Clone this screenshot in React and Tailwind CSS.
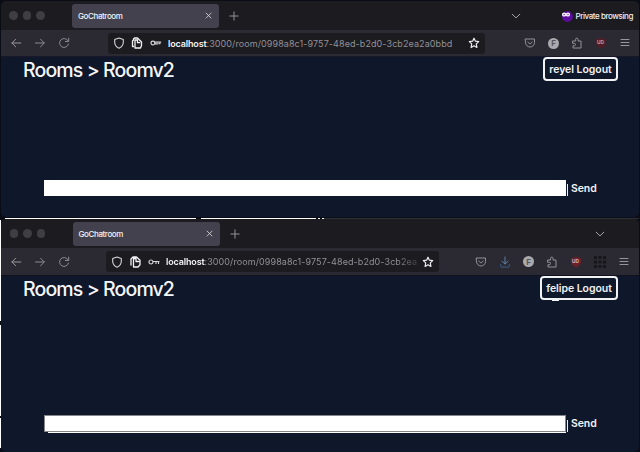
import React from "react";

const stroke = { fill: "none", stroke: "currentColor", strokeLinecap: "round", strokeLinejoin: "round" };

function Icon({ children, className = "", size = 12, width = 1 }) {
  return (
    <svg viewBox="0 0 12 12" width={size} height={size} strokeWidth={width} {...stroke} className={`block shrink-0 ${className}`}>
      {children}
    </svg>
  );
}

const Back = () => <Icon className="text-[#96959b]"><path d="M10.8 6H1.9M5.7 2.2 1.9 6l3.8 3.8" /></Icon>;
const Forward = () => <Icon className="text-[#8a8990]"><path d="M1.5 6h8.8M6.5 2.2 10.3 6 6.5 9.8" /></Icon>;
const Reload = () => <Icon className="text-[#8a8990]"><path d="M10 3.7A4.5 4.5 0 1 0 10.5 7M10.7 1.2v3.3H7.4" /></Icon>;
const Shield = () => <Icon className="text-[#d5d5d8]" width={1.1}><path d="M6 1 10.3 2.5v2.7C10.3 8 8.6 10 6 11.2 3.4 10 1.7 8 1.7 5.2V2.5Z" /></Icon>;
const Star = () => <Icon className="text-[#eeeef0]" width={1.2}><path d="m6 1.2 1.4 3 3.3.4-2.4 2.3.6 3.6L6 8.8l-2.9 1.7.6-3.6-2.4-2.3 3.3-.4Z" /></Icon>;
const Chevron = () => <Icon className="text-[#a5a4aa]"><path d="m2.2 4.2 3.8 3.7 3.8-3.7" /></Icon>;
const Pocket = () => <Icon className="text-[#929197]"><path d="M1.5 2h9v3.5a4.5 4.5 0 0 1-9 0ZM3.8 5 6 7.1 8.2 5" /></Icon>;
const Puzzle = () => (
  <Icon className="text-[#929197]">
    <path d="M2 4h2.6V2.3a1.2 1.2 0 0 1 2.4 0V4h3v7H2V8.7h1.3a1.2 1.2 0 0 0 0-2.4H2Z" />
  </Icon>
);
const Menu = () => <Icon className="text-[#96959b]"><path d="M2 2.5h8M2 5.5h8M2 8.5h8" /></Icon>;
const Download = () => (
  <Icon>
    <path d="M1.7 8.5v1.7q0 .9.9.9h6.8q.9 0 .9-.9V8.5" stroke="#3c5f86" />
    <path d="M6 1v7M3 5.2 6 8l3-2.8" stroke="#6080a4" />
  </Icon>
);

function Page({ framed }) {
  return (
    <Icon className="text-[#f4f4f5]" width={1.3}>
      {framed ? (
        <path d="M2 9V3l2-2h3.5L11 4.2v4.6L9 11H4.5V2.5H7v3h2.7" />
      ) : (
        <path d="M2.5 9.5h-1V4l1-1V2l1-1h3L10.5 5v3.5L9.5 11H4V3h2.5v2.7h2.2" />
      )}
    </Icon>
  );
}

const Grid = () => (
  <svg viewBox="0 0 12 12" width="12" height="12" className="block shrink-0">
    {[0, 4.5, 9].map((y) => [0, 4.5, 9].map((x) => (
      <rect key={`${x}-${y}`} x={x} y={y} width="3" height="3" rx=".5" fill="#17171b" />
    )))}
  </svg>
);

function Account() {
  return (
    <div className="flex h-[11px] w-[11px] shrink-0 items-center justify-center rounded-full bg-[#aaa9ad] text-[8px] font-bold leading-none text-[#56555c]">
      F
    </div>
  );
}

function Blocker({ lit }) {
  return (
    <svg viewBox="0 0 12 12" width="12" height="12" className="block shrink-0">
      <path d="M1 2.2 6.2.8l5 1.4v3.6c0 2.6-2 4.3-5 5.6C3 10.1 1 8.4 1 5.8Z" fill={lit ? "#68202a" : "#4f1e28"} />
      <text x="5.4" y="6.8" textAnchor="middle" fontSize="4.8" fontWeight="700" fill={lit ? "#dcb5ba" : "#b99ea3"}>UD</text>
    </svg>
  );
}

function Key({ wide }) {
  return (
    <svg viewBox="0 0 12 8" width="12" height="8" strokeWidth="1.2" {...stroke} className="block shrink-0 text-[#d5d5d8]">
      {wide ? (
        <path d="M5 4a2 2 0 1 1-4 0 2 2 0 0 1 4 0ZM5 3.5h6M8 3.5v2M10.5 3.5v2" />
      ) : (
        <path d="M4.8 4a1.9 1.9 0 1 1-3.8 0 1.9 1.9 0 0 1 3.8 0ZM5.3 3.2h5.4M5.5 4.9h2M9 4.7h1" />
      )}
    </svg>
  );
}

function PrivateBadge() {
  return (
    <div className="flex items-center gap-[2px]">
      <svg viewBox="0 0 12 12" width="12" height="12" className="block">
        <circle cx="6.5" cy="6.5" r="5.4" fill="#5b0c9b" />
        <path d="M.9 4.4q0-1.8 2.2-1.8 1.4 0 2 .8.8-.8 2-.8 2 0 2 1.8 0 2.2-2 2.2-1.2 0-2-.9-.8.9-2 .9-2.2 0-2.2-2.2Z" fill="#f5effb" />
        <circle cx="3.1" cy="4.6" r=".7" fill="#5b0c9b" />
        <circle cx="7" cy="4.6" r=".7" fill="#5b0c9b" />
      </svg>
      <span className="text-[8px] font-medium leading-none tracking-[-0.42px] text-[#f1f1f3]">Private browsing</span>
    </div>
  );
}

function TabStrip({ isPrivate }) {
  return (
    <div className={`flex h-[29px] shrink-0 items-center bg-[#1c1b20] ${isPrivate ? "pl-2" : "pl-[8.5px]"}`}>
      <div className="flex gap-[5px]">
        <i className="h-[8.5px] w-[8.5px] rounded-full bg-[#3e3e43]" />
        <i className="h-[8.5px] w-[8.5px] rounded-full bg-[#3e3e43]" />
        <i className="h-[8.5px] w-[8.5px] rounded-full bg-[#3e3e43]" />
      </div>
      <div className="ml-[27.5px] flex h-6 w-[147px] items-center justify-between rounded-[3px] bg-[#42414d] pl-[6px] pr-[5px]">
        <span className="text-[8px] font-medium leading-none tracking-[-0.4px] text-[#f4f4f6]">GoChatroom</span>
        <Icon size={10} className="text-[#d8d8dc]"><path d="m2.5 2.5 6 6M8.5 2.5l-6 6" /></Icon>
      </div>
      <Icon className="ml-[9px] text-[#929197]"><path d="M6 1.8v8.4M1.8 6h8.4" /></Icon>
      <div className={`ml-auto flex items-center ${isPrivate ? "gap-[39px] pr-[6px]" : "pr-[33px]"}`}>
        <Chevron />
        {isPrivate && <PrivateBadge />}
      </div>
    </div>
  );
}

function NavBar({ isPrivate }) {
  return (
    <div className={`flex shrink-0 items-center bg-[#2b2a33] pl-[9px] ${isPrivate ? "h-[26px] pr-[8px]" : "h-[27px] pr-[9px]"}`}>
      <div className="flex gap-3">
        <Back />
        <Forward />
        <Reload />
      </div>
      <div className={`flex h-[21px] shrink-0 items-center rounded-[3px] bg-[#1c1b20] px-[5px] ${isPrivate ? "ml-[38px] w-[377px]" : "ml-[36px] w-[333px]"}`}>
        <Shield />
        <div className="ml-[6px]"><Page framed={!isPrivate} /></div>
        <div className="ml-[7px]"><Key wide={!isPrivate} /></div>
        <div className={`ml-[6px] flex-1 whitespace-nowrap pt-px text-[9px] leading-[12px] tracking-[0.09px] text-[#929197] ${isPrivate ? "" : "[mask-image:linear-gradient(to_right,black_90%,transparent_101%)]"}`}>
          <span className="font-semibold tracking-[-0.15px] text-[#f4f4f6]">localhost</span>
          {isPrivate ? ":3000/room/0998a8c1-9757-48ed-b2d0-3cb2ea2a0bbd" : ":3000/room/0998a8c1-9757-48ed-b2d0-3cb2ea"}
        </div>
        <Star />
      </div>
      <div className="ml-auto flex items-center gap-3">
        <Pocket />
        {!isPrivate && <Download />}
        <Account />
        <Puzzle />
        <Blocker lit={!isPrivate} />
        {!isPrivate && <Grid />}
        <Menu />
      </div>
    </div>
  );
}

function Chat({ user, isPrivate }) {
  return (
    <div className={`flex min-h-0 flex-1 flex-col border-t bg-[#0f172a] pl-[22px] pr-[21px] ${isPrivate ? "border-[#181828]" : "border-[#10121f]"}`}>
      <div className="flex items-start justify-between">
        <h1 className="mt-[1px] text-[19.5px] font-medium leading-[25px] tracking-[-0.88px] text-[#f5f6f8]">Rooms &gt; Roomv2</h1>
        <button className={`relative flex h-[24px] items-center justify-center rounded-[4px] border-2 border-[#f1f2f4] pt-[2px] text-[10.5px] font-semibold leading-none tracking-[-0.05px] text-[#f1f2f4] ${isPrivate ? "w-[75px]" : "w-[78px]"}`}>
          {user} Logout
          {!isPrivate && <i className="absolute -bottom-[3px] left-[10px] h-px w-[7px] bg-[#f1f2f4]" />}
        </button>
      </div>
      <div className={`mt-auto flex items-center pl-[21px] ${isPrivate ? "mb-[21px]" : "mb-[19px]"}`}>
        {isPrivate ? (
          <div className="h-[16px] w-[522px] bg-white" />
        ) : (
          <div className="w-[522px]">
            <div className="h-[17px] border border-[#85868c] bg-white" />
            <div className="ml-[4px] h-px bg-white" />
          </div>
        )}
        <i className="ml-px mt-[3px] h-[12px] w-px bg-[#eef0f2]" />
        <button className={`ml-[3px] text-[10.5px] font-semibold leading-[14px] tracking-[-0.1px] text-[#f1f2f4] ${isPrivate ? "pt-[2px]" : ""}`}>Send</button>
      </div>
    </div>
  );
}

function BrowserWindow({ user, isPrivate }) {
  return (
    <section className={`flex flex-col overflow-hidden rounded-[5px] ${isPrivate ? "h-[216px]" : "h-[233px] flex-1"}`}>
      <TabStrip isPrivate={isPrivate} />
      <NavBar isPrivate={isPrivate} />
      <Chat user={user} isPrivate={isPrivate} />
    </section>
  );
}

export default function App() {
  return (
    <main className="h-[452px] w-[640px] overflow-hidden bg-[#0b0d16] pt-px font-['Inter','Liberation_Sans',sans-serif]">
      <div className="px-px">
        <BrowserWindow user="reyel" isPrivate />
        <div className="flex h-[2px] items-end">
          <i className="ml-[4px] h-px w-[191px] bg-white" />
          <i className="ml-[5px] h-px w-[115px] bg-white" />
          <i className="ml-[2px] h-px w-[2px] bg-white" />
          <i className="ml-[2px] h-px w-[2px] bg-white" />
          <i className="h-px flex-1 bg-[#303039]" />
        </div>
      </div>
      <div className="flex pr-px">
        <div className="flex w-px flex-col">
          <i className="mt-px h-[101px] bg-white" />
          <i className="mt-[4px] h-[91px] bg-white" />
          <i className="mt-[2px] h-[30px] bg-white" />
        </div>
        <BrowserWindow user="felipe" />
      </div>
    </main>
  );
}
